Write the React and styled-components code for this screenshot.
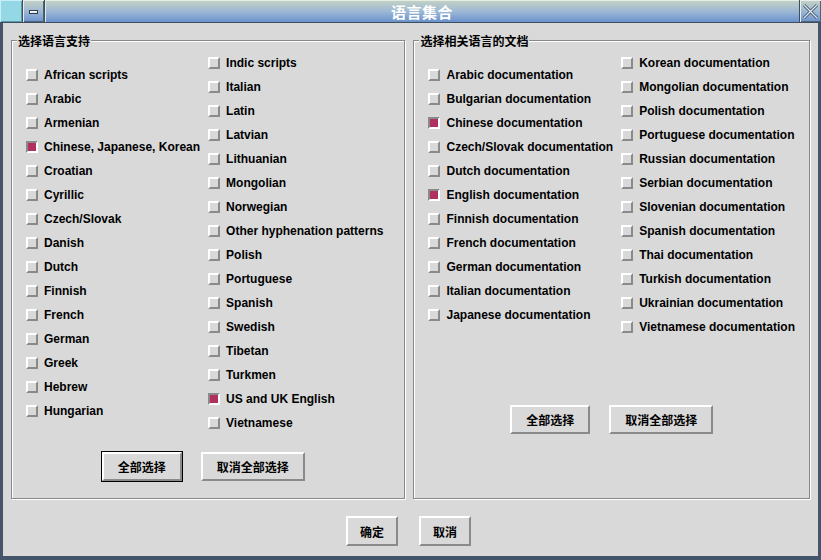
import React from 'react';
import styled, { createGlobalStyle } from 'styled-components';

const GlobalStyle = createGlobalStyle`
  body {
    margin: 0;
    background: #d9d9d9;
  }
`;

const FONT = '"Liberation Sans", "Noto Sans CJK SC", Arial, sans-serif';
const CJK = '"Noto Sans CJK SC", "Liberation Sans", sans-serif';

const Window = styled.div`
  width: 821px;
  height: 560px;
  display: flex;
  flex-direction: column;
  background: #d9d9d9;
  overflow: hidden;
`;

const TitleBar = styled.div`
  height: 22px;
  display: flex;
  border-bottom: 1px solid #3e4e5e;
  background: #3e4e5e;
  gap: 1px;
`;

const MenuBox = styled.div`
  width: 22px;
  background: #94d8e6;
  box-shadow: inset 1px 1px 0 #c8eef6, inset -1px -1px 0 #5a9aaa;
`;

const TitleButton = styled.div`
  width: 21px;
  display: flex;
  align-items: center;
  justify-content: center;
  background: linear-gradient(#c6d3c2, #9ab6d6 55%, #6a92cc);
  box-shadow: inset 1px 1px 0 #e8eef0, inset -1px -1px 0 #4e6478;
`;

const MinGlyph = styled.div`
  width: 7px;
  height: 2px;
  margin-top: 2px;
  border: 1px solid #2e3e50;
  box-shadow: inset 1px 1px 0 #fff;
  background: #dfe8f0;
`;

const Caption = styled.div`
  flex: 1;
  display: flex;
  align-items: center;
  justify-content: center;
  background: linear-gradient(#c6d3c2, #9ab6d6 55%, #6a92cc);
  box-shadow: inset 1px 1px 0 #e4ece6;
  color: #fff;
  font-family: ${CJK};
  font-weight: bold;
  font-size: 15px;
  letter-spacing: 0.5px;
`;

const Body = styled.div`
  flex: 1;
  display: flex;
  flex-direction: column;
  border-left: 3px solid #44546a;
  border-right: 3px solid #44546a;
  border-bottom: 4px solid #44546a;
  padding: 17px 8px 0 8px;
`;

const Groups = styled.div`
  display: flex;
  gap: 8px;
`;

const Group = styled.div`
  flex: 1;
  height: 459px;
  box-sizing: border-box;
  position: relative;
  border: 1px solid #888;
  box-shadow: inset 1px 1px 0 #fff, 1px 1px 0 #fff;
  padding: 10px 14px 0 14px;
`;

const GroupTitle = styled.div`
  position: absolute;
  top: -9px;
  left: 5px;
  padding: 0 1px;
  background: #d9d9d9;
  font-family: ${CJK};
  font-weight: bold;
  font-size: 12px;
  line-height: 17px;
  color: #000;
`;

const Columns = styled.div`
  display: flex;
  align-items: center;
  gap: 8px;
`;

const Column = styled.div`
  display: flex;
  flex-direction: column;
`;

const Row = styled.div`
  height: 24px;
  display: flex;
  align-items: center;
  font-family: ${FONT};
  font-weight: bold;
  font-size: 12px;
  color: #000;
  white-space: nowrap;
`;

const Check = styled.span`
  width: 12px;
  height: 12px;
  box-sizing: border-box;
  margin-right: 6px;
  border: 2px solid;
  border-color: ${(p) => (p.$on ? '#8a8a8a #fff #fff #8a8a8a' : '#fff #8a8a8a #8a8a8a #fff')};
  background: ${(p) => (p.$on ? '#b03060' : '#d9d9d9')};
`;

const ButtonRow = styled.div`
  display: flex;
  justify-content: center;
  gap: 19px;
  margin-top: ${(p) => p.$top}px;
  padding-right: ${(p) => p.$shift || 0}px;
`;

const Button = styled.button`
  height: ${(p) => (p.$tall ? 30 : 29)}px;
  box-sizing: border-box;
  padding: 0 ${(p) => p.$pad}px;
  background: #d9d9d9;
  border: 2px solid;
  border-color: #fff #8a8a8a #8a8a8a #fff;
  outline: ${(p) => (p.$default ? '1px solid #000' : 'none')};
  font-family: ${CJK};
  font-weight: bold;
  font-size: 12px;
  color: #000;
  cursor: pointer;
`;

const Footer = styled.div`
  display: flex;
  justify-content: center;
  gap: 21px;
  padding-top: 17px;
  padding-right: 4px;
`;

const CloseIcon = () => (
  <svg width="17" height="17" viewBox="0 0 17 17">
    <path d="M2 2 L15 15 M15 2 L2 15" stroke="#3e5266" strokeWidth="3" />
    <path d="M2 2 L15 15 M15 2 L2 15" stroke="#dde6ee" strokeWidth="1.4" />
  </svg>
);

const Item = ({ label, on }) => (
  <Row>
    <Check $on={on} />
    {label}
  </Row>
);

const langA = [
  'African scripts', 'Arabic', 'Armenian', 'Chinese, Japanese, Korean', 'Croatian',
  'Cyrillic', 'Czech/Slovak', 'Danish', 'Dutch', 'Finnish', 'French', 'German',
  'Greek', 'Hebrew', 'Hungarian',
];
const langB = [
  'Indic scripts', 'Italian', 'Latin', 'Latvian', 'Lithuanian', 'Mongolian',
  'Norwegian', 'Other hyphenation patterns', 'Polish', 'Portuguese', 'Spanish',
  'Swedish', 'Tibetan', 'Turkmen', 'US and UK English', 'Vietnamese',
];
const docA = [
  'Arabic', 'Bulgarian', 'Chinese', 'Czech/Slovak', 'Dutch', 'English', 'Finnish',
  'French', 'German', 'Italian', 'Japanese',
];
const docB = [
  'Korean', 'Mongolian', 'Polish', 'Portuguese', 'Russian', 'Serbian', 'Slovenian',
  'Spanish', 'Thai', 'Turkish', 'Ukrainian', 'Vietnamese',
];
const checked = ['Chinese, Japanese, Korean', 'US and UK English', 'Chinese documentation', 'English documentation'];

const List = ({ items }) => (
  <Column>
    {items.map((l) => (
      <Item key={l} label={l} on={checked.includes(l)} />
    ))}
  </Column>
);

export default function App() {
  const withDoc = (a) => a.map((l) => `${l} documentation`);
  return (
    <>
      <GlobalStyle />
      <Window>
        <TitleBar>
          <MenuBox />
          <TitleButton>
            <MinGlyph />
          </TitleButton>
          <Caption>语言集合</Caption>
          <TitleButton>
            <CloseIcon />
          </TitleButton>
        </TitleBar>
        <Body>
          <Groups>
            <Group>
              <GroupTitle>选择语言支持</GroupTitle>
              <Columns>
                <List items={langA} />
                <List items={langB} />
              </Columns>
              <ButtonRow $top={17} $shift={10}>
                <Button $pad={14} $default>全部选择</Button>
                <Button $pad={14}>取消全部选择</Button>
              </ButtonRow>
            </Group>
            <Group>
              <GroupTitle>选择相关语言的文档</GroupTitle>
              <Columns>
                <List items={withDoc(docA)} />
                <List items={withDoc(docB)} />
              </Columns>
              <ButtonRow $top={66}>
                <Button $pad={14}>全部选择</Button>
                <Button $pad={14}>取消全部选择</Button>
              </ButtonRow>
            </Group>
          </Groups>
          <Footer>
            <Button $pad={12} $tall>确定</Button>
            <Button $pad={12} $tall>取消</Button>
          </Footer>
        </Body>
      </Window>
    </>
  );
}
